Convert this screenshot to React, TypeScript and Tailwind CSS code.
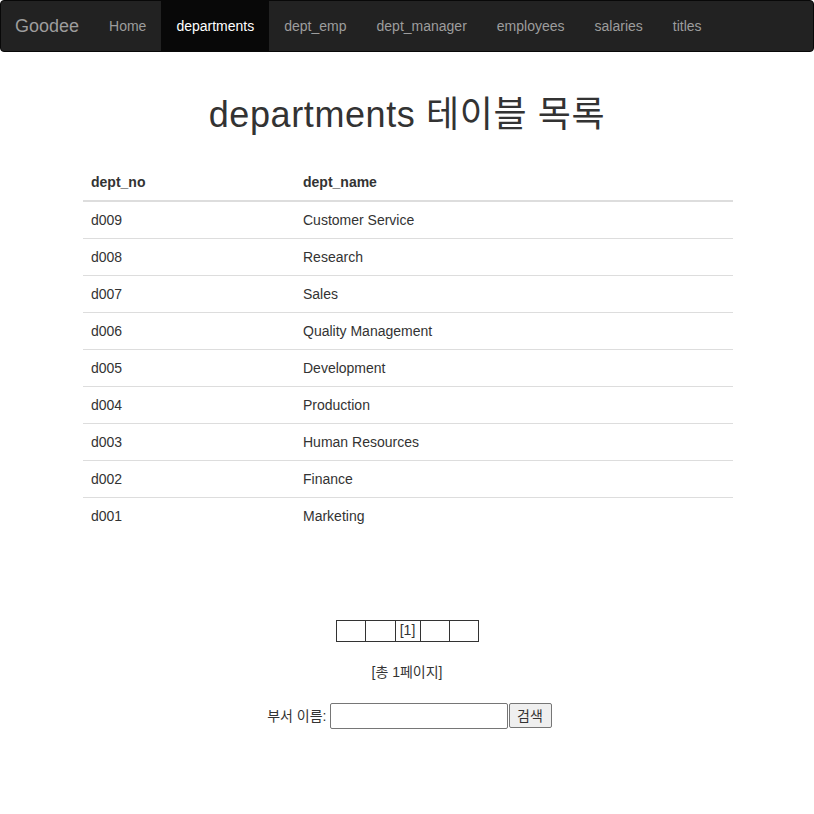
const navItems = ["Home", "departments", "dept_emp", "dept_manager", "employees", "salaries", "titles"]

const departments = [
    { no: "d009", name: "Customer Service" },
    { no: "d008", name: "Research" },
    { no: "d007", name: "Sales" },
    { no: "d006", name: "Quality Management" },
    { no: "d005", name: "Development" },
    { no: "d004", name: "Production" },
    { no: "d003", name: "Human Resources" },
    { no: "d002", name: "Finance" },
    { no: "d001", name: "Marketing" },
]

const font = "font-['Liberation_Sans','Noto_Sans_CJK_KR',sans-serif]"

export default function App() {
    return (
        <div className={`${font} text-[14px] leading-[20px] text-[#333] bg-white min-h-[814px]`}>
            {/* Navbar */}
            <nav className="h-[52px] bg-[#222] border border-[#080808] rounded-[4px] flex items-stretch">
                <a className="pl-[14px] pr-[15px] flex items-center text-[18px] text-[#9d9d9d]">Goodee</a>
                <ul className="flex items-stretch">
                    {navItems.map(item => (
                        <li
                            key={item}
                            className={
                                item === "departments"
                                    ? "px-[15px] flex items-center bg-[#080808] text-white"
                                    : "px-[15px] flex items-center text-[#9d9d9d]"
                            }
                        >
                            {item}
                        </li>
                    ))}
                </ul>
            </nav>

            {/* Title */}
            <h1 className="mt-[43px] mb-[10px] text-center text-[36px] leading-[39.6px] font-normal tracking-[0.6px]">
                departments 테이블 목록
            </h1>

            {/* Table */}
            <table className="w-[650px] ml-[83px] mt-[29px] border-collapse">
                <thead>
                    <tr className="border-b-2 border-[#ddd]">
                        <th className="w-[212px] p-2 text-left font-bold">dept_no</th>
                        <th className="p-2 text-left font-bold">dept_name</th>
                    </tr>
                </thead>
                <tbody>
                    {departments.map((d, i) => (
                        <tr key={d.no} className={i === 0 ? "" : "border-t border-[#ddd]"}>
                            <td className="p-2">{d.no}</td>
                            <td className="p-2">{d.name}</td>
                        </tr>
                    ))}
                </tbody>
            </table>

            {/* Paging */}
            <div className="flex justify-center mt-[86px]">
                <table className="border-collapse">
                    <tbody>
                        <tr className="h-[21px]">
                            <td className="border border-[#333] w-[29px] p-0"></td>
                            <td className="border border-[#333] w-[30px] p-0"></td>
                            <td className="border border-[#333] w-[25px] p-0 text-center leading-[19px]">[1]</td>
                            <td className="border border-[#333] w-[29px] p-0"></td>
                            <td className="border border-[#333] w-[29px] p-0"></td>
                        </tr>
                    </tbody>
                </table>
            </div>

            <div className="text-center mt-5">[총 1페이지]</div>

            {/* Search */}
            <form className="flex justify-center items-center mt-[21px]">
                <label className="w-[67px] pr-[3px] text-right whitespace-nowrap">부서 이름:</label>
                <input
                    type="text"
                    className="w-[178px] h-[26px] border border-[#767676] rounded-[2px] px-[2px] outline-none"
                />
                <button
                    type="button"
                    className="ml-[1px] w-[43px] h-[25px] bg-[#efefef] border border-[#767676] rounded-[2px] text-[14px] text-[#333]"
                >
                    검색
                </button>
            </form>
        </div>
    )
}
